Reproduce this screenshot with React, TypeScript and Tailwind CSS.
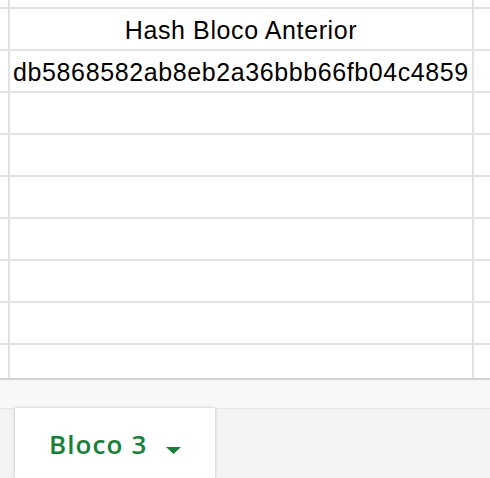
import React from 'react';

const Row = ({ text, h = 'h-[42px]', last = false }: { text?: string; h?: string; last?: boolean }) => (
  <div className={`flex ${h} border-b-2 ${last ? 'border-[#d4d4d4]' : 'border-[#e2e2e2]'}`}>
    <div className="w-[10px] shrink-0 border-r-2 border-[#e2e2e2]" />
    <div className="w-[464px] shrink-0 border-r-2 border-[#e2e2e2] flex items-center justify-center overflow-hidden whitespace-nowrap">
      {text && <span className="text-[25px] tracking-[0.6px] leading-none text-black pt-[2px]">{text}</span>}
    </div>
    <div className="flex-1" />
  </div>
);

const App = () => {
  const rows = ['Hash Bloco Anterior', 'db5868582ab8eb2a36bbb66fb04c4859', '', '', '', '', '', ''];

  return (
    <div className="w-[490px] h-[478px] overflow-hidden bg-white flex flex-col font-['Liberation_Sans',Arial,sans-serif]">
      {/* Sheet grid */}
      <div className="flex flex-col shrink-0">
        <Row h="h-[9px]" />
        {rows.map((r, i) => (
          <Row key={i} text={r} />
        ))}
        <Row h="h-[35px]" last />
      </div>

      {/* Strip above tabs */}
      <div className="h-[29px] shrink-0 bg-[#f8f8f8] border-b border-[#e4e6e9]" />

      {/* Sheet tabs */}
      <div className="flex-1 bg-[#f1f3f4] flex">
        <div className="ml-[15px] -mt-px w-[200px] bg-white shadow-[0_0_3px_rgba(60,64,67,0.3)] flex items-start pt-[22px] pl-[34px]">
          <span className="font-['Open_Sans',sans-serif] font-semibold text-[26px] tracking-[1.1px] leading-[28px] text-[#188038]">Bloco 3</span>
          <svg className="ml-[19px] mt-[17px]" width="15" height="7" viewBox="0 0 15 7">
            <path d="M0 0 L15 0 L7.5 7 Z" fill="#188038" />
          </svg>
        </div>
      </div>
    </div>
  );
};

export default App;
